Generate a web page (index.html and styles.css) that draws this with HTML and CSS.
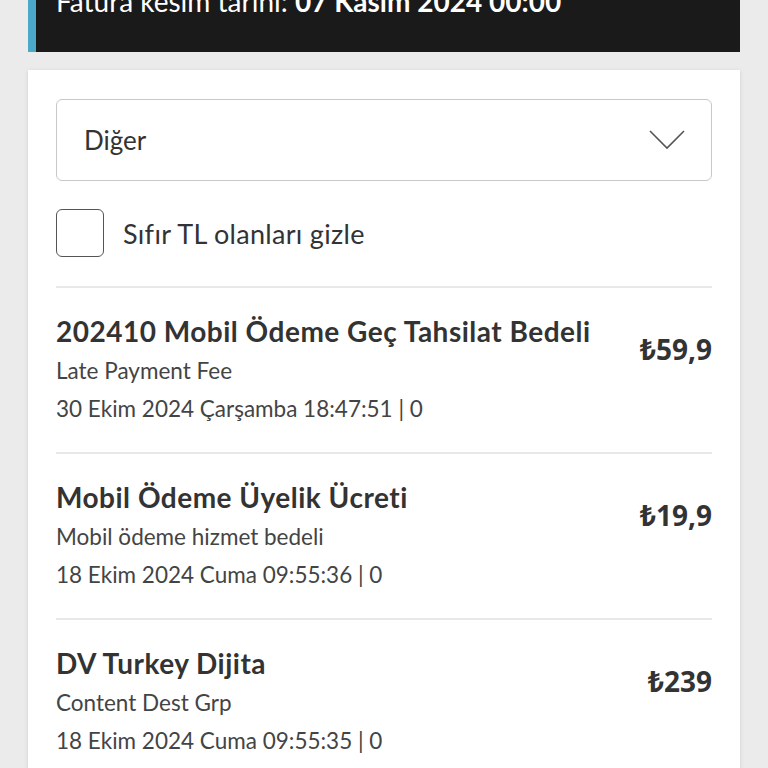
FILE: index.html
```html
<!DOCTYPE html>
<html lang="tr">
<head>
    <meta charset="UTF-8">
    <meta name="viewport" content="width=device-width, initial-scale=1.0">
    <title>Fatura Detayı</title>
    <link rel="stylesheet" href="styles.css">
</head>
<body>
    <div class="page">
        <div class="bill-banner">
            <p class="bill-date">Fatura kesim tarihi: <strong>07 Kasım 2024 00:00</strong></p>
        </div>

        <div class="card">
            <div class="select">
                <span>Diğer</span>
                <svg class="chevron" width="36" height="20" viewBox="0 0 36 20">
                    <path d="M1 1 L18 18 L35 1" fill="none" stroke="#555" stroke-width="1.6"/>
                </svg>
            </div>

            <label class="check-row">
                <span class="checkbox"></span>
                <span>Sıfır TL olanları gizle</span>
            </label>

            <ul class="charges">
                <li class="charge">
                    <div class="charge-info">
                        <h3>202410 Mobil Ödeme Geç Tahsilat Bedeli</h3>
                        <p>Late Payment Fee</p>
                        <p>30 Ekim 2024 Çarşamba 18:47:51 | 0</p>
                    </div>
                    <div class="price">₺59,9</div>
                </li>
                <li class="charge">
                    <div class="charge-info">
                        <h3>Mobil Ödeme Üyelik Ücreti</h3>
                        <p>Mobil ödeme hizmet bedeli</p>
                        <p>18 Ekim 2024 Cuma 09:55:36 | 0</p>
                    </div>
                    <div class="price">₺19,9</div>
                </li>
                <li class="charge">
                    <div class="charge-info">
                        <h3>DV Turkey Dijita</h3>
                        <p>Content Dest Grp</p>
                        <p>18 Ekim 2024 Cuma 09:55:35 | 0</p>
                    </div>
                    <div class="price">₺239</div>
                </li>
            </ul>
        </div>
    </div>
</body>
</html>
```

FILE: styles.css
```css
body {
    margin: 0;
    background-color: #ebebeb;
    font-family: Lato, "Noto Sans", sans-serif;
    color: #333;
}
.page {
    padding: 0 28px;
    margin-top: -30px;
}
.bill-banner {
    background-color: #1a1a1a;
    border-left: 8px solid #4aa8c8;
    padding: 14px 20px 34px;
}
.bill-date {
    margin: 0;
    color: #fff;
    font-size: 28px;
    line-height: 34px;
}
.card {
    background-color: #fff;
    margin-top: 18px;
    padding: 29px 28px 0;
    box-shadow: 0 1px 4px rgba(0,0,0,0.12);
}
.select {
    height: 80px;
    border: 1px solid #c8c8c8;
    border-radius: 6px;
    display: flex;
    align-items: center;
    justify-content: space-between;
    padding: 0 26px 0 27px;
    font-size: 26px;
    color: #333;
}
.check-row {
    display: flex;
    align-items: center;
    gap: 19px;
    margin-top: 28px;
    font-size: 27px;
    letter-spacing: 0.3px;
    color: #333;
}
.checkbox {
    width: 46px;
    height: 46px;
    border: 1px solid #555;
    border-radius: 6px;
}
.charges {
    list-style: none;
    margin: 29px 0 0;
    padding: 0;
}
.charge {
    display: flex;
    justify-content: space-between;
    align-items: flex-start;
    border-top: 2px solid #e8e8e8;
    padding-top: 26px;
    box-sizing: border-box;
    height: 166px;
}
.charge-info h3 {
    margin: 0 0 4px;
    font-size: 28px;
    letter-spacing: 0.5px;
    font-weight: 700;
    line-height: 34px;
}
.charge-info p {
    margin: 0;
    font-size: 22.5px;
    line-height: 38px;
    color: #444;
}
.price {
    font-family: "Noto Sans", sans-serif;
    font-size: 28px;
    font-weight: 700;
    line-height: 34px;
    margin-top: 18px;
}
```
